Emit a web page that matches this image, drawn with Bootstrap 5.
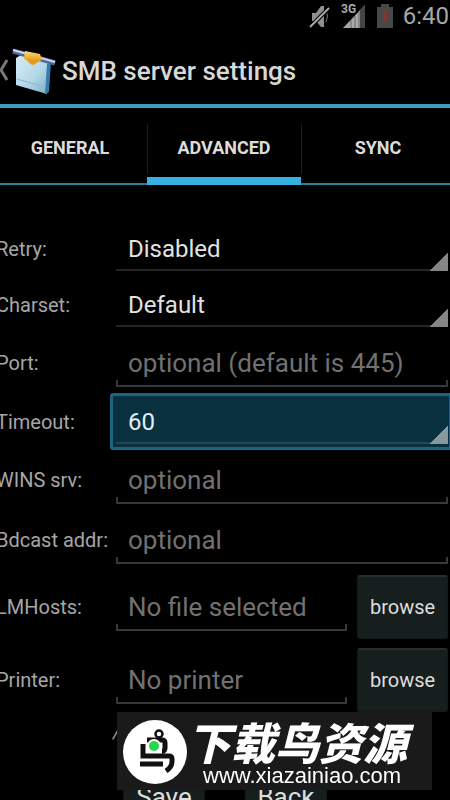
<!DOCTYPE html>
<html lang="en" data-bs-theme="dark">
<head>
<meta charset="utf-8">
<meta name="viewport" content="width=device-width, initial-scale=1">
<title>SMB server settings</title>
<link href="https://cdn.jsdelivr.net/npm/bootstrap@5.3.0/dist/css/bootstrap.min.css" rel="stylesheet">
<style>
html,body{height:100%;overflow:hidden}
body{background:#000;color:#ddd;font-family:Roboto,"Noto Sans CJK SC",sans-serif}
.status{height:32px;color:#a8a8a8;font-size:24px;line-height:32px;gap:10px;padding-right:1px}
.title-bar{height:72px;padding-top:6px}
.title-bar h1{font-size:26px;line-height:32px;color:#d8d8d8}
.tabs{height:81px;border-top:4px solid #3a9dbd;border-bottom:2px solid #2b7f9b;margin:0 -5px 0 -7px}
.tabs .nav-item{position:relative}
.tabs .nav-item + .nav-item::before{content:"";position:absolute;left:0;top:16px;width:1px;height:50px;background:#1c1c1c}
.tabs .nav-link{color:#dcdcdc;font-size:18px;line-height:24px;font-weight:700;height:77px;border-radius:0;padding:28px 0 0}
.tabs .nav-link.active{border-bottom:8px solid #35b1e1}
.settings{padding-top:36px}
.line{height:60px;padding-right:2px}
.line.short{height:56px}
.line.tall{height:73px}
.line.lit{height:57px;padding-right:0}
.caption{width:116px;font-size:20px;line-height:28px;color:#a6a6a6;margin-left:-4px;white-space:nowrap}
.line .caption + *{margin-left:4px}
.field{border:0;border-radius:0;outline:0;min-width:0;width:100%;font-size:24px;line-height:32px;padding:0 12px;appearance:none}
input.field{height:48px;font-size:26px;color:#ddd;background:
 linear-gradient(#383838,#383838) bottom/100% 2px no-repeat,
 linear-gradient(#383838,#383838) left bottom/2px 7px no-repeat,
 linear-gradient(#383838,#383838) right bottom/2px 7px no-repeat}
input.field::placeholder{color:#717171;opacity:1}
select.field{height:44px;color:#e2e2e2;background:
 linear-gradient(135deg,transparent 50%,#858585 50%) right bottom/18px 19px no-repeat,
 linear-gradient(#262626,#262626) bottom/100% 2px no-repeat}
.glow{border:3px solid #1e6482;border-right-width:1px;border-radius:3px 0 0 3px;background:#09303f;padding:0 1px 0 3px;height:57px}
.line .caption + .glow{margin-left:-2px}
.glow select.field{color:#e4eef2;background:
 linear-gradient(135deg,transparent 50%,#87979c 50%) right bottom/18px 19px no-repeat,
 linear-gradient(#244656,#244656) bottom/100% 2px no-repeat}
.pad{background:#171e1e;border:1px solid #141919;border-top:2px solid #292d2d;border-radius:3px;color:#dedede}
.pad.pick{width:91px;height:64px;font-size:20px;line-height:28px;margin-left:10px;padding:0}
.pad.act{width:82px;height:64px;font-size:26px;line-height:32px;padding:0}
.note{height:48px;padding:0 113px;font-size:20px;font-style:italic;color:#999}
.actions{gap:40px;padding-left:123px}
.stamp{position:fixed;left:117px;top:712px;width:315px;height:78px;background:#1a1a1a;color:#fff;padding:0 6px}
.stamp strong{font-family:"Noto Sans CJK SC",sans-serif;font-weight:900;font-style:italic;font-size:44px;line-height:44px;height:44px;margin-top:6px}
.stamp span{font-family:"Liberation Sans",sans-serif;font-size:22px;line-height:26px;padding-left:16px}
</style>
</head>
<body>
<header>
 <div class="status d-flex justify-content-end align-items-center text-nowrap">
  <svg width="22" height="28" viewBox="0 0 22 28"><path d="M3 11h4l5-7h3v21h-3l-5-6H3z" fill="#8f8f8f"/><path d="M17 8q3 6 0 12" stroke="#777" fill="none"/><path d="M1 25 20 6" stroke="#000" stroke-width="4"/><path d="M1 25 20 6" stroke="#aaa" stroke-width="2"/></svg>
  <svg width="26" height="28" viewBox="0 0 26 28"><path d="M2 26 24 3v23z" fill="#a9a9a9"/><path d="M19 8 24 3v23h-5z" fill="#444"/><path d="M10 18v8M14 14v12M18 10v16" stroke="#666"/><path d="M0 0h15v12H0z" fill="#000"/><text x="0" y="11" font-size="12" font-weight="700" fill="#aaa">3G</text></svg>
  <svg width="16" height="26" viewBox="0 0 16 26"><path d="M4 1h8v3h4v21H0V4h4z" fill="#484848"/><path d="m9 6-4 9h3l-2 7 5-9H8l3-7z" fill="#a02f20"/></svg>
  <span>6:40</span>
 </div>
 <div class="title-bar d-flex align-items-center">
  <svg width="8" height="26" viewBox="0 0 8 26"><path d="M7 2 1 12l6 10" fill="none" stroke="#777" stroke-width="3"/></svg>
  <svg class="ms-1" width="46" height="48" viewBox="0 0 46 48">
   <defs><linearGradient id="box" x2="1" y2="1"><stop stop-color="#d5edf7"/><stop offset=".55" stop-color="#b5d7e8"/><stop offset="1" stop-color="#78abc6"/></linearGradient><linearGradient id="joint" x2="0" y2="1"><stop stop-color="#ffdc70"/><stop offset="1" stop-color="#d98500"/></linearGradient></defs>
   <path d="m4 11 5-3 29 7-3 32-31-9z" fill="url(#box)"/><path d="m35 17 4-2-2 30-4 2z" fill="#347da8"/><path d="m5 32 28 8" stroke="#8bb8cc"/><path d="m1 4 42 12" stroke="#506799" stroke-width="5"/><path d="m1 3 42 12" stroke="#c9d7f2" stroke-width="2"/><path d="m13 4 15 3 2 6-8 4-10-5z" fill="url(#joint)"/><path d="m16 12 8 2v3l-4 1-4-3z" fill="#e39c1b"/>
  </svg>
  <h1 class="mb-0 ms-1 text-nowrap">SMB server settings</h1>
 </div>
 <nav class="tabs">
  <ul class="nav nav-fill flex-nowrap">
   <li class="nav-item col-4"><a class="nav-link" href="#general">GENERAL</a></li>
   <li class="nav-item col-4"><a class="nav-link active" aria-current="page" href="#advanced">ADVANCED</a></li>
   <li class="nav-item col-4"><a class="nav-link" href="#sync">SYNC</a></li>
  </ul>
 </nav>
</header>
<main>
<form class="settings">
 <div class="line short d-flex align-items-center"><label class="caption flex-shrink-0" for="retry">Retry:</label><select class="field" id="retry"><option>Disabled</option></select></div>
 <div class="line short d-flex align-items-center"><label class="caption flex-shrink-0" for="charset">Charset:</label><select class="field" id="charset"><option>Default</option></select></div>
 <div class="line d-flex align-items-center"><label class="caption flex-shrink-0" for="port">Port:</label><input class="field" id="port" type="text" placeholder="optional (default is 445)"></div>
 <div class="line lit d-flex align-items-center"><label class="caption flex-shrink-0" for="timeout">Timeout:</label><div class="glow flex-grow-1 d-flex align-items-center"><select class="field" id="timeout"><option>60</option></select></div></div>
 <div class="line d-flex align-items-center"><label class="caption flex-shrink-0" for="wins">WINS srv:</label><input class="field" id="wins" type="text" placeholder="optional"></div>
 <div class="line d-flex align-items-center"><label class="caption flex-shrink-0" for="bdcast">Bdcast addr:</label><input class="field" id="bdcast" type="text" placeholder="optional"></div>
 <div class="line tall d-flex align-items-center"><label class="caption flex-shrink-0" for="lmhosts">LMHosts:</label><input class="field" id="lmhosts" type="text" placeholder="No file selected"><button class="pad pick flex-shrink-0" type="button">browse</button></div>
 <div class="line tall d-flex align-items-center"><label class="caption flex-shrink-0" for="printer">Printer:</label><input class="field" id="printer" type="text" placeholder="No printer"><button class="pad pick flex-shrink-0" type="button">browse</button></div>
 <div class="note">/</div>
 <div class="actions d-flex"><button class="pad act" type="button">Save</button><button class="pad act" type="button">Back</button></div>
</form>
</main>
<aside class="stamp d-flex align-items-center">
 <svg class="flex-shrink-0" width="64" height="66" viewBox="0 0 64 66"><circle cx="32" cy="34" r="32" fill="#fff"/><circle cx="36" cy="16" r="3.500" fill="none" stroke="#111" stroke-width="2.500"/><path d="M24 22h15q3 0 3 3v5q0 3-3 3M20 26v12h26q3 0 3 3v3q0 5-6 9M17 46h23" fill="none" stroke="#111" stroke-width="5"/><circle cx="31" cy="28" r="7" fill="#fff"/><circle cx="31" cy="28" r="5" fill="#25d74b"/></svg>
 <div class="d-flex flex-column text-nowrap"><strong>下载鸟资源</strong><span>www.xiazainiao.com</span></div>
</aside>
<script src="https://cdn.jsdelivr.net/npm/bootstrap@5.3.0/dist/js/bootstrap.bundle.min.js"></script>
</body>
</html>
